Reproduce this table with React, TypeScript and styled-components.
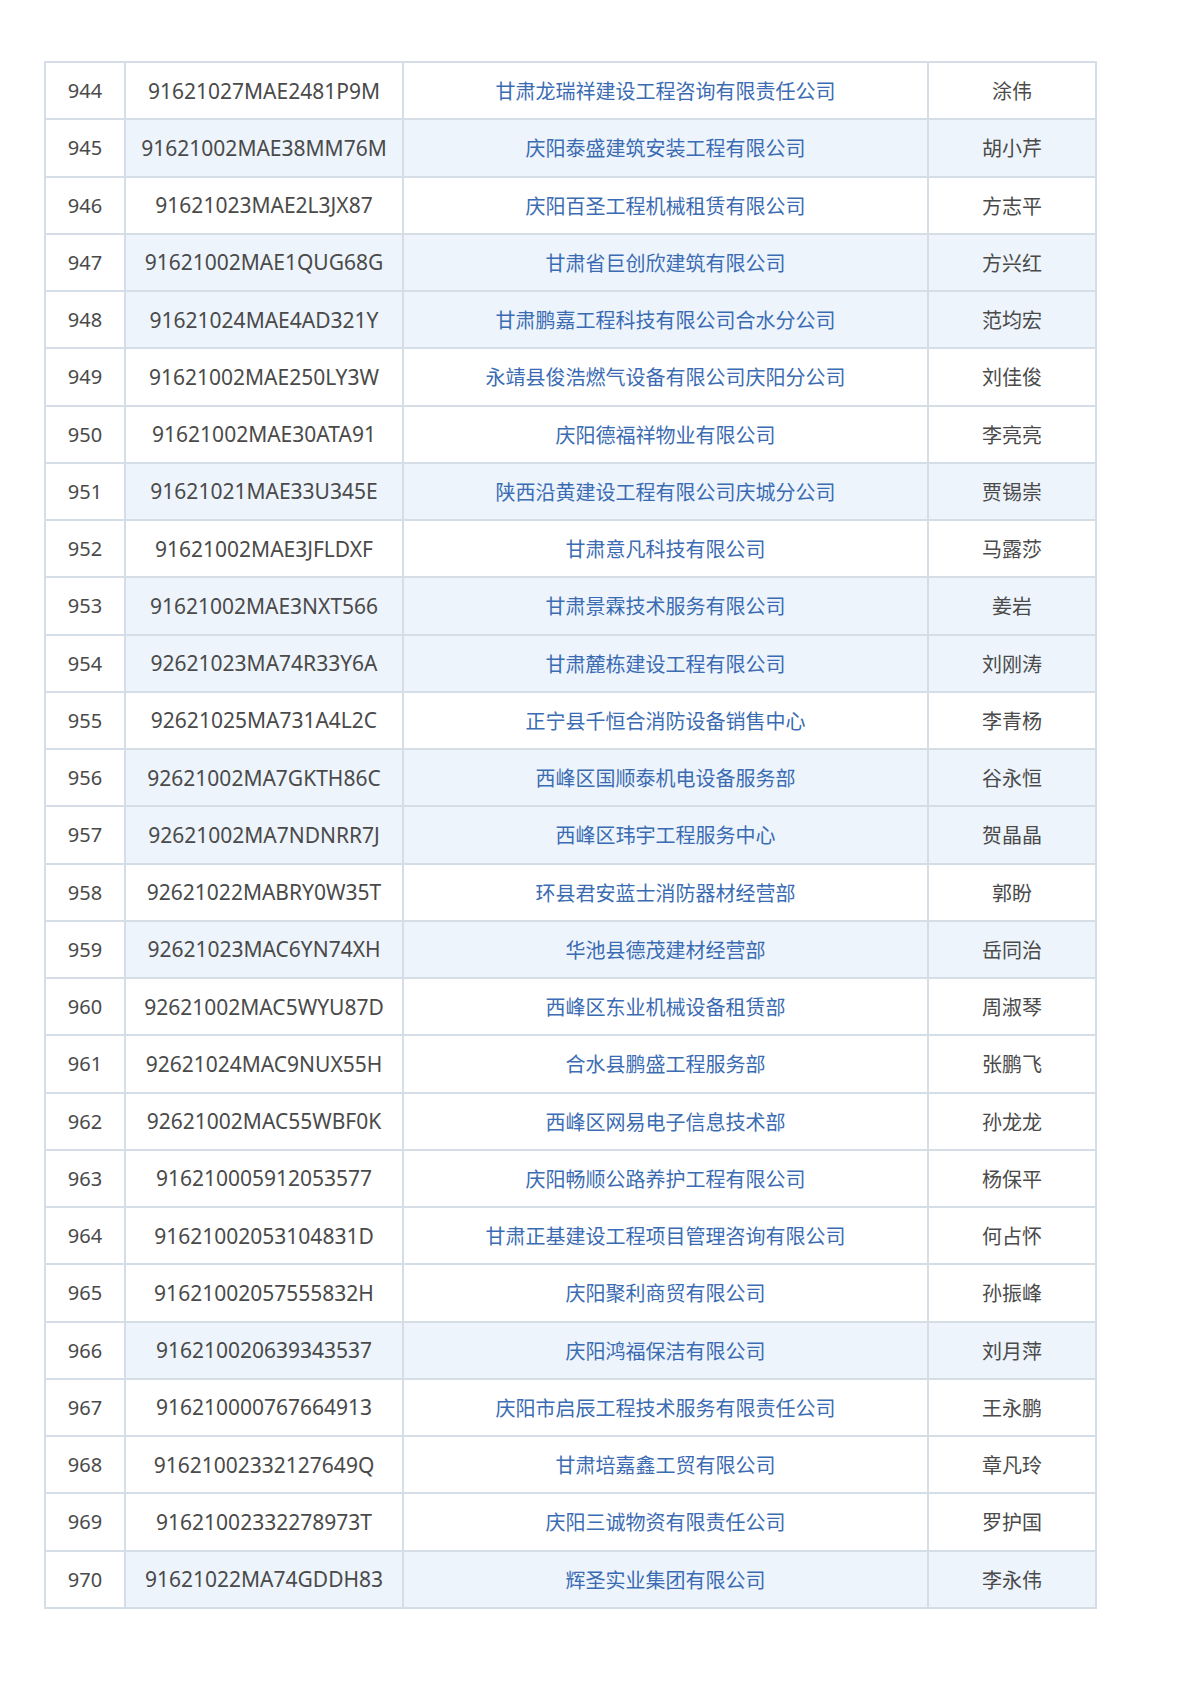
import React from 'react';
import styled, { createGlobalStyle } from 'styled-components';

const GlobalStyle = createGlobalStyle`
  html, body {
    margin: 0;
    padding: 0;
    background: #ffffff;
  }
  body {
    font-family: "Noto Sans", "Noto Sans CJK SC", sans-serif;
  }
`;

const Page = styled.div`
  min-height: 1695px;
  padding: 61px 0 0 44px;
  box-sizing: border-box;
`;

const Table = styled.table`
  border-collapse: collapse;
  table-layout: fixed;
  width: 1051px;
  font-size: 20px;
`;

const Col = styled.col<{ $width: number }>`
  width: ${(p) => p.$width}px;
`;

const Row = styled.tr`
  height: 57.26px;
`;

const Cell = styled.td<{ $shaded?: boolean; $tone?: 'gray' | 'blue'; $wide?: boolean }>`
  border: 2px solid #d5dde7;
  padding: 0;
  text-align: center;
  vertical-align: middle;
  white-space: nowrap;
  font-size: ${(p) => (p.$wide ? '21px' : '20px')};
  color: ${(p) => (p.$tone === 'blue' ? '#3b6cb3' : '#4a4a4a')};
  background: ${(p) => (p.$shaded ? '#edf4fc' : '#ffffff')};
`;

interface IEntry {
  no: number;
  code: string;
  company: string;
  person: string;
}

const entries: IEntry[] = [
  { no: 944, code: '91621027MAE2481P9M', company: '甘肃龙瑞祥建设工程咨询有限责任公司', person: '涂伟' },
  { no: 945, code: '91621002MAE38MM76M', company: '庆阳泰盛建筑安装工程有限公司', person: '胡小芹' },
  { no: 946, code: '91621023MAE2L3JX87', company: '庆阳百圣工程机械租赁有限公司', person: '方志平' },
  { no: 947, code: '91621002MAE1QUG68G', company: '甘肃省巨创欣建筑有限公司', person: '方兴红' },
  { no: 948, code: '91621024MAE4AD321Y', company: '甘肃鹏嘉工程科技有限公司合水分公司', person: '范均宏' },
  { no: 949, code: '91621002MAE250LY3W', company: '永靖县俊浩燃气设备有限公司庆阳分公司', person: '刘佳俊' },
  { no: 950, code: '91621002MAE30ATA91', company: '庆阳德福祥物业有限公司', person: '李亮亮' },
  { no: 951, code: '91621021MAE33U345E', company: '陕西沿黄建设工程有限公司庆城分公司', person: '贾锡崇' },
  { no: 952, code: '91621002MAE3JFLDXF', company: '甘肃意凡科技有限公司', person: '马露莎' },
  { no: 953, code: '91621002MAE3NXT566', company: '甘肃景霖技术服务有限公司', person: '姜岩' },
  { no: 954, code: '92621023MA74R33Y6A', company: '甘肃麓栋建设工程有限公司', person: '刘刚涛' },
  { no: 955, code: '92621025MA731A4L2C', company: '正宁县千恒合消防设备销售中心', person: '李青杨' },
  { no: 956, code: '92621002MA7GKTH86C', company: '西峰区国顺泰机电设备服务部', person: '谷永恒' },
  { no: 957, code: '92621002MA7NDNRR7J', company: '西峰区玮宇工程服务中心', person: '贺晶晶' },
  { no: 958, code: '92621022MABRY0W35T', company: '环县君安蓝士消防器材经营部', person: '郭盼' },
  { no: 959, code: '92621023MAC6YN74XH', company: '华池县德茂建材经营部', person: '岳同治' },
  { no: 960, code: '92621002MAC5WYU87D', company: '西峰区东业机械设备租赁部', person: '周淑琴' },
  { no: 961, code: '92621024MAC9NUX55H', company: '合水县鹏盛工程服务部', person: '张鹏飞' },
  { no: 962, code: '92621002MAC55WBF0K', company: '西峰区网易电子信息技术部', person: '孙龙龙' },
  { no: 963, code: '916210005912053577', company: '庆阳畅顺公路养护工程有限公司', person: '杨保平' },
  { no: 964, code: '91621002053104831D', company: '甘肃正基建设工程项目管理咨询有限公司', person: '何占怀' },
  { no: 965, code: '91621002057555832H', company: '庆阳聚利商贸有限公司', person: '孙振峰' },
  { no: 966, code: '916210020639343537', company: '庆阳鸿福保洁有限公司', person: '刘月萍' },
  { no: 967, code: '916210000767664913', company: '庆阳市启辰工程技术服务有限责任公司', person: '王永鹏' },
  { no: 968, code: '91621002332127649Q', company: '甘肃培嘉鑫工贸有限公司', person: '章凡玲' },
  { no: 969, code: '91621002332278973T', company: '庆阳三诚物资有限责任公司', person: '罗护国' },
  { no: 970, code: '91621022MA74GDDH83', company: '辉圣实业集团有限公司', person: '李永伟' },
];

// rows that carry the pale blue tint in the source
const shadedRows = new Set([945, 947, 948, 951, 953, 954, 956, 957, 959, 966, 970]);

const App: React.FC = () => {
  return (
    <>
      <GlobalStyle />
      <Page>
        <Table>
          <colgroup>
            <Col $width={80} />
            <Col $width={278} />
            <Col $width={525} />
            <Col $width={168} />
          </colgroup>
          <tbody>
            {entries.map((entry) => {
              const shaded = shadedRows.has(entry.no);
              return (
                <Row key={entry.no}>
                  <Cell>{entry.no}</Cell>
                  <Cell $shaded={shaded} $wide>{entry.code}</Cell>
                  <Cell $shaded={shaded} $tone="blue">{entry.company}</Cell>
                  <Cell $shaded={shaded}>{entry.person}</Cell>
                </Row>
              );
            })}
          </tbody>
        </Table>
      </Page>
    </>
  );
};

export default App;
